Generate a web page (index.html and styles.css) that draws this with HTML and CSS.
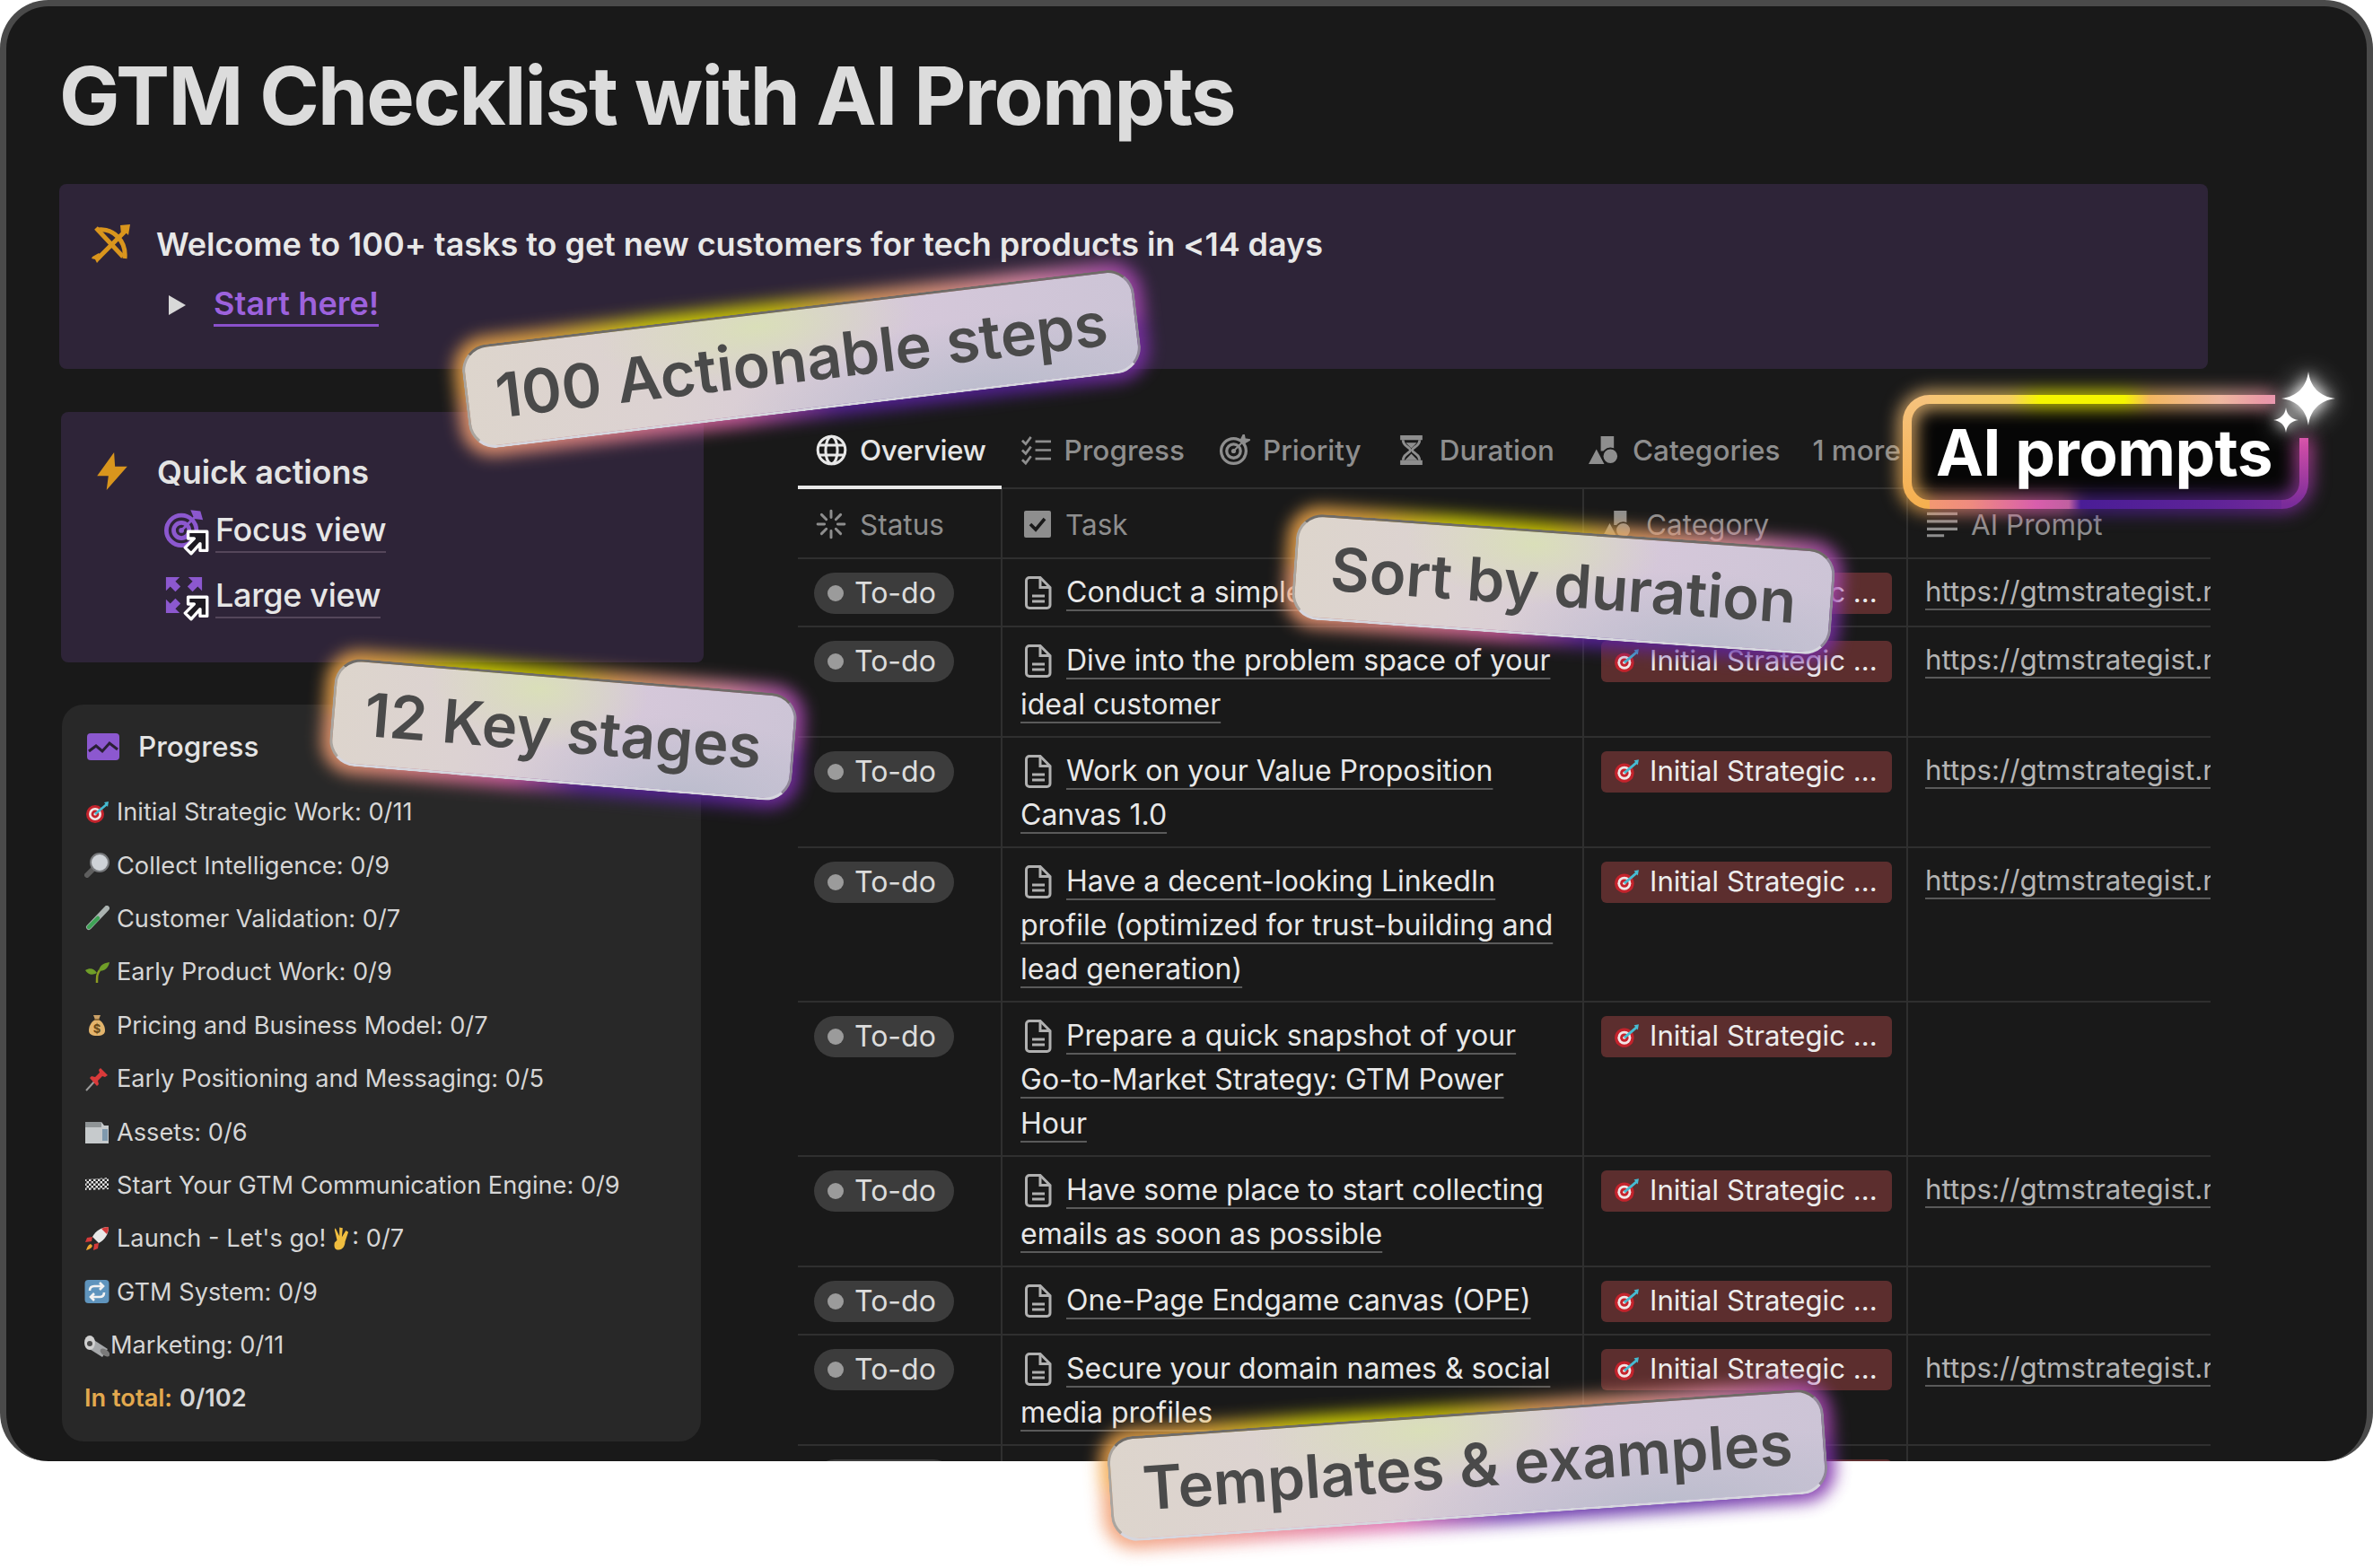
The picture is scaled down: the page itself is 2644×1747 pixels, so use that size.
FILE: index.html
```html
<!DOCTYPE html>
<html lang="en">
<head>
<meta charset="utf-8">
<title>GTM Checklist with AI Prompts</title>
<link rel="stylesheet" href="styles.css">
</head>
<body>
<svg class="defs" width="0" height="0" aria-hidden="true">
  <symbol id="dart" viewBox="0 0 28 28">
    <circle cx="12" cy="16" r="10" fill="#c4232c"/><circle cx="12" cy="16" r="7" fill="#f2e6e6"/><circle cx="12" cy="16" r="4.4" fill="#c4232c"/><circle cx="12" cy="16" r="1.6" fill="#f2e6e6"/>
    <path d="M12 16L25 5" stroke="#46bcd2" stroke-width="2.6"/><path d="M22 3l5-1-1 6z" fill="#46bcd2"/>
  </symbol>
  <symbol id="doc" viewBox="0 0 30 37">
    <path d="M5 1.5h12l11 11V32a3.500 3.500 0 0 1-3.500 3.500H5A3.500 3.500 0 0 1 1.500 32V5A3.500 3.500 0 0 1 5 1.500z" fill="none" stroke="#b0b0b0" stroke-width="3"/>
    <path d="M17 2v10.500h10.500M8 22h14M8 28h14" fill="none" stroke="#b0b0b0" stroke-width="3"/>
  </symbol>
  <symbol id="shortcut" viewBox="0 0 26 26">
    <path d="M5 2h19v19h-7v-7L8 24 2 18l9-9H5z" fill="#1d1a22" stroke="#fff" stroke-width="3" stroke-linejoin="round"/>
  </symbol>
</svg>

<div class="stage">
  <div class="window">
    <h1 class="title">GTM Checklist with AI Prompts</h1>

    <section class="callout banner">
      <svg class="ico-bow" viewBox="0 0 44 44"><g fill="none" stroke="#d9951d" stroke-width="5"><path d="M7 6C24 4 39 18 37 38"/><path d="M5 4l30 32M38 7L7 38"/></g><path d="M32 1l11-1-2 12-4-4-4 3z M1 36l7-4 4 4-6 7-2-4-4-1z" fill="#d9951d"/></svg>
      <div class="callout-body">
        <p class="callout-head">Welcome to 100+ tasks to get new customers for tech products in &lt;14 days</p>
        <p class="toggle"><span class="tri"></span><a class="start">Start here!</a></p>
      </div>
    </section>

    <div class="columns">
      <aside class="side">
        <section class="callout quick">
          <svg class="ico-bolt" viewBox="0 0 34 40"><path d="M19 0L1 25h12l-2 15 22-25H20z" fill="#d9951d"/></svg>
          <div class="quick-body">
            <p class="quick-head">Quick actions</p>
            <a class="qlink">
              <span class="qicon">
                <svg class="qsvg" viewBox="0 0 46 46"><g fill="none" stroke="#8c58cf" stroke-width="5"><circle cx="20" cy="24" r="17.500"/><circle cx="20" cy="24" r="9"/></g><circle cx="20" cy="24" r="3" fill="#8c58cf"/><path d="M21 23L36 8M33 2l8 1 2 7-7-1z" stroke="#8c58cf" stroke-width="3" fill="#8c58cf"/></svg>
                <svg class="qarrow"><use href="#shortcut"/></svg>
              </span>
              <span class="qtext">Focus view</span>
            </a>
            <a class="qlink">
              <span class="qicon">
                <svg class="qsvg" viewBox="0 0 46 46"><path d="M2 2h16l-5 5 6 6-6 6-6-6-5 5zM44 2v16l-5-5-6 6-6-6 6-6-5-5zM2 44V28l5 5 6-6 6 6-6 6 5 5z" fill="#8c58cf"/></svg>
                <svg class="qarrow"><use href="#shortcut"/></svg>
              </span>
              <span class="qtext">Large view</span>
            </a>
          </div>
        </section>

        <section class="progress">
          <header class="progress-head">
            <svg class="ico-chart" viewBox="0 0 36 30"><rect x="0" y="0" width="36" height="30" rx="4" fill="#8c58cf"/><path d="M2 20l8-6 7 6 8-9 9 7" fill="none" stroke="#2a1f36" stroke-width="3"/></svg>
            <span>Progress</span>
          </header>
          <ul class="plist">
            <li><svg class="emo"><use href="#dart"/></svg>Initial Strategic Work: 0/11</li>
            <li><svg class="emo" viewBox="0 0 28 28"><path d="M12 16L3 25" stroke="#5e5e5e" stroke-width="6" stroke-linecap="round"/><circle cx="17" cy="11" r="10" fill="#cfd3d8" stroke="#77797c" stroke-width="2"/></svg>Collect Intelligence: 0/9</li>
            <li><svg class="emo" viewBox="0 0 28 28"><path d="M25 3L5 24" stroke="#aab2b0" stroke-width="6" stroke-linecap="round"/><path d="M15 14L5 24" stroke="#3ea356" stroke-width="4.500" stroke-linecap="round"/></svg>Customer Validation: 0/7</li>
            <li><svg class="emo" viewBox="0 0 28 28"><path d="M14 26c0-7 0-10 3-14" fill="none" stroke="#8c9c22" stroke-width="2.500"/><path d="M16 13C17 6 22 4 28 3c-1 6-5 10-12 10zM14 15C11 10 6 9 1 12c3 5 8 6 13 3z" fill="#6f9e28"/></svg>Early Product Work: 0/9</li>
            <li><svg class="emo" viewBox="0 0 28 28"><path d="M10 3h8l-2 5h-4z" fill="#caa066"/><path d="M12 8h4c5 3 7 8 7 12 0 4-3 6-9 6s-9-2-9-6c0-4 2-9 7-12z" fill="#e3b46c"/><path d="M11 8h6" stroke="#7a5a2a" stroke-width="1.500"/><text class="dollar" x="14" y="23" text-anchor="middle">$</text></svg>Pricing and Business Model: 0/7</li>
            <li><svg class="emo" viewBox="0 0 28 28"><path d="M13 15L2 27" stroke="#9a9a9a" stroke-width="2"/><path d="M18 2l8 8-3 2-3-1-5 5 1 4-2 2L6 13l2-2 4 1 5-5-1-3z" fill="#d93a3a"/></svg>Early Positioning and Messaging: 0/5</li>
            <li><svg class="emo" viewBox="0 0 28 28"><path d="M1 3h18l3 4h5v20H1z" fill="#c6cacc"/><path d="M1 3h18v6H1z" fill="#8f9496"/><rect x="20" y="11" width="6" height="13" fill="#7f99ad"/></svg>Assets: 0/6</li>
            <li><svg class="emo" viewBox="0 0 28 28"><defs><pattern id="chk" width="5" height="5" patternUnits="userSpaceOnUse"><rect width="5" height="5" fill="#e4e4e4"/><rect width="2.500" height="2.500" fill="#1e1e1e"/><rect x="2.500" y="2.500" width="2.500" height="2.500" fill="#1e1e1e"/></pattern></defs><path d="M1 8l26-2v13L1 20z" fill="url(#chk)"/></svg>Start Your GTM Communication Engine: 0/9</li>
            <li><svg class="emo" viewBox="0 0 28 28"><path d="M27 1c-8 0-14 4-18 11l7 7c7-4 11-10 11-18z" fill="#e8e8e8"/><path d="M27 1c-4 0-6 1-8 2l6 6c1-2 2-5 2-8z" fill="#d43a3a"/><path d="M9 12l-6 1-2 5 7-1zM16 19l-1 6-5 2 1-7z" fill="#d43a3a"/><path d="M7 20c-3 1-4 4-5 7 3-1 6-2 7-5z" fill="#f0a830"/></svg>Launch - Let's go!<svg class="emo-in" viewBox="0 0 20 28"><path d="M3 1l5 10 0-11 4 1-1 11 5-8 3 2-4 12c0 5-3 10-8 10s-6-4-5-9l3-3-3-13z" fill="#efbd3f"/></svg>: 0/7</li>
            <li><svg class="emo" viewBox="0 0 28 28"><rect x="0.500" y="1" width="27" height="26" rx="4" fill="#5f94bd"/><path d="M6 13c0-4 2-5 5-5h9M17 4l4 4-4 4M22 15c0 4-2 5-5 5H8M11 24l-4-4 4-4" fill="none" stroke="#f2f2f2" stroke-width="2.600"/></svg>GTM System: 0/9</li>
            <li class="tight"><svg class="emo" viewBox="0 0 28 28"><path d="M6 5l20 13-6 9L1 15z" fill="#a6a8aa"/><ellipse cx="23" cy="22" rx="3.500" ry="6" fill="#7a7a7a" transform="rotate(-55 23 22)"/><ellipse cx="6" cy="11" rx="6" ry="8" fill="#d0d0d0"/><circle cx="6" cy="12" r="3" fill="#4a4a4a"/></svg>Marketing: 0/11</li>
            <li class="total"><b class="amber">In total:</b><b>0/102</b></li>
          </ul>
        </section>
      </aside>

      <main class="board">
        <nav class="tabs">
          <a class="tab active">
            <svg class="tab-ico" viewBox="0 0 32 32"><g fill="none" stroke="#e8e8e8" stroke-width="2.800"><circle cx="16" cy="16" r="14"/><ellipse cx="16" cy="16" rx="6" ry="14"/><path d="M3 11h26M3 21h26"/></g></svg>
            Overview
          </a>
          <a class="tab">
            <svg class="tab-ico" viewBox="0 0 36 32"><g fill="none" stroke="#8e8e8e" stroke-width="2.800"><path d="M2 5l4 4 6-8M2 16l4 4 6-8M2 27l4 4 6-8M17 6h18M17 16h18M17 26h18"/></g></svg>
            Progress
          </a>
          <a class="tab">
            <svg class="tab-ico" viewBox="0 0 34 34"><g fill="none" stroke="#8e8e8e" stroke-width="3.200"><circle cx="16" cy="18" r="13.500"/><circle cx="16" cy="18" r="7.500"/></g><circle cx="16" cy="18" r="2.500" fill="#8e8e8e"/><path d="M16 18L29 5M27 0l1 5 5 1-5 3-4-3z" stroke="#8e8e8e" stroke-width="2" fill="#8e8e8e"/></svg>
            Priority
          </a>
          <a class="tab">
            <svg class="tab-ico" viewBox="0 0 28 34"><path d="M2 1h24v5H2zM2 28h24v5H2z" fill="#8e8e8e"/><path d="M5 6c0 7 8 8 8 11s-8 4-8 11M23 6c0 7-8 8-8 11s8 4 8 11" fill="none" stroke="#8e8e8e" stroke-width="2.800"/><path d="M8 9h12l-6 6zM7 28l7-7 7 7z" fill="#8e8e8e"/></svg>
            Duration
          </a>
          <a class="tab">
            <svg class="tab-ico" viewBox="0 0 36 34"><path d="M14 1h15v17H14z M0 33l9-17 9 17z" fill="#8e8e8e"/><circle cx="25" cy="24" r="9" fill="#8e8e8e" stroke="#191919" stroke-width="2"/></svg>
            Categories
          </a>
          <a class="tab more">1 more</a>
        </nav>
        <table class="db">
          <colgroup><col class="c1"><col class="c2"><col class="c3"><col class="c4"></colgroup>
          <thead>
            <tr>
              <th><span class="th"><svg class="th-ico" viewBox="0 0 32 32"><g stroke="#8e8e8e" stroke-width="2.800" stroke-linecap="round"><path d="M16 2v7M16 23v7M2 16h7M23 16h7M6 6l5 5M21 21l5 5M26 6l-5 5M11 21l-5 5"/></g></svg>Status</span></th>
              <th><span class="th th-task"><svg class="th-ico small" viewBox="0 0 30 30"><rect width="30" height="30" rx="2" fill="#8e8e8e"/><path d="M7 15l6 6 10-12" fill="none" stroke="#191919" stroke-width="3.600"/></svg>Task</span></th>
              <th><span class="th th-cat"><svg class="th-ico" viewBox="0 0 36 34"><path d="M14 1h15v17H14z M0 33l9-17 9 17z" fill="#8e8e8e"/><circle cx="25" cy="24" r="9" fill="#8e8e8e" stroke="#191919" stroke-width="2"/></svg>Category</span></th>
              <th><span class="th th-ai"><svg class="th-ico" viewBox="0 0 32 28"><path d="M0 3h32M0 11h32M0 19h32M0 26h18" stroke="#8e8e8e" stroke-width="3"/></svg>AI Prompt</span></th>
            </tr>
          </thead>
          <tbody>
            <tr class="r1">
              <td><span class="pill"><i class="dot"></i>To-do</span></td>
              <td class="task"><a class="tlink"><svg class="doc"><use href="#doc"/></svg><span class="u">Conduct a simple market analysis</span></a></td>
              <td><span class="tag"><svg class="tag-emo"><use href="#dart"/></svg>Initial Strategic ...</span></td>
              <td class="url"><span class="u">https://gtmstrategist.notion.site</span></td>
            </tr>
            <tr class="r2">
              <td><span class="pill"><i class="dot"></i>To-do</span></td>
              <td class="task"><a class="tlink"><svg class="doc"><use href="#doc"/></svg><span class="u">Dive into the problem space of your <br>ideal customer</span></a></td>
              <td><span class="tag"><svg class="tag-emo"><use href="#dart"/></svg>Initial Strategic ...</span></td>
              <td class="url"><span class="u">https://gtmstrategist.notion.site</span></td>
            </tr>
            <tr class="r2">
              <td><span class="pill"><i class="dot"></i>To-do</span></td>
              <td class="task"><a class="tlink"><svg class="doc"><use href="#doc"/></svg><span class="u">Work on your Value Proposition <br>Canvas 1.0</span></a></td>
              <td><span class="tag"><svg class="tag-emo"><use href="#dart"/></svg>Initial Strategic ...</span></td>
              <td class="url"><span class="u">https://gtmstrategist.notion.site</span></td>
            </tr>
            <tr class="r3">
              <td><span class="pill"><i class="dot"></i>To-do</span></td>
              <td class="task"><a class="tlink"><svg class="doc"><use href="#doc"/></svg><span class="u">Have a decent-looking LinkedIn <br>profile (optimized for trust-building and <br>lead generation)</span></a></td>
              <td><span class="tag"><svg class="tag-emo"><use href="#dart"/></svg>Initial Strategic ...</span></td>
              <td class="url"><span class="u">https://gtmstrategist.notion.site</span></td>
            </tr>
            <tr class="r3">
              <td><span class="pill"><i class="dot"></i>To-do</span></td>
              <td class="task"><a class="tlink"><svg class="doc"><use href="#doc"/></svg><span class="u">Prepare a quick snapshot of your <br>Go-to-Market Strategy: GTM Power <br>Hour</span></a></td>
              <td><span class="tag"><svg class="tag-emo"><use href="#dart"/></svg>Initial Strategic ...</span></td>
              <td class="url"></td>
            </tr>
            <tr class="r2">
              <td><span class="pill"><i class="dot"></i>To-do</span></td>
              <td class="task"><a class="tlink"><svg class="doc"><use href="#doc"/></svg><span class="u">Have some place to start collecting <br>emails as soon as possible</span></a></td>
              <td><span class="tag"><svg class="tag-emo"><use href="#dart"/></svg>Initial Strategic ...</span></td>
              <td class="url"><span class="u">https://gtmstrategist.notion.site</span></td>
            </tr>
            <tr class="r1">
              <td><span class="pill"><i class="dot"></i>To-do</span></td>
              <td class="task"><a class="tlink"><svg class="doc"><use href="#doc"/></svg><span class="u">One-Page Endgame canvas (OPE)</span></a></td>
              <td><span class="tag"><svg class="tag-emo"><use href="#dart"/></svg>Initial Strategic ...</span></td>
              <td class="url"></td>
            </tr>
            <tr class="r2">
              <td><span class="pill"><i class="dot"></i>To-do</span></td>
              <td class="task"><a class="tlink"><svg class="doc"><use href="#doc"/></svg><span class="u">Secure your domain names &amp; social <br>media profiles</span></a></td>
              <td><span class="tag"><svg class="tag-emo"><use href="#dart"/></svg>Initial Strategic ...</span></td>
              <td class="url"><span class="u">https://gtmstrategist.notion.site</span></td>
            </tr>
            <tr class="r1">
              <td><span class="pill"><i class="dot"></i>To-do</span></td>
              <td class="task"></td>
              <td><span class="tag"><svg class="tag-emo"><use href="#dart"/></svg>Initial Strategic ...</span></td>
              <td class="url"></td>
            </tr>
          </tbody>
        </table>
      </main>
    </div>
  </div>

  <div class="sticker s1"><span class="face">100 Actionable steps</span></div>
  <div class="sticker s2"><span class="face">12 Key stages</span></div>
  <div class="sticker s3"><span class="face">Sort by duration</span></div>
  <div class="sticker s4"><span class="face">Templates &amp; examples</span></div>

  <div class="ai-box">
    <svg class="ai-frame" viewBox="0 0 520 170">
      <defs>
        <linearGradient id="gTop" x1="30" x2="440" y1="0" y2="0" gradientUnits="userSpaceOnUse">
          <stop offset="0" stop-color="#f6c27c"/><stop offset=".28" stop-color="#f6d060"/><stop offset=".36" stop-color="#f5f500"/><stop offset=".59" stop-color="#f5f500"/><stop offset=".66" stop-color="#f3b660"/><stop offset=".85" stop-color="#efb8a0"/><stop offset="1" stop-color="#e88fa8"/>
        </linearGradient>
        <linearGradient id="gLeft" x1="0" x2="0" y1="30" y2="147" gradientUnits="userSpaceOnUse">
          <stop offset="0" stop-color="#f6c27c"/><stop offset="1" stop-color="#f5b050"/>
        </linearGradient>
        <linearGradient id="gBot" x1="30" x2="480" y1="0" y2="0" gradientUnits="userSpaceOnUse">
          <stop offset="0" stop-color="#f6a06a"/><stop offset=".16" stop-color="#ee8a80"/><stop offset=".32" stop-color="#d85eac"/><stop offset=".40" stop-color="#c060a0"/><stop offset=".43" stop-color="#4a1d96"/><stop offset=".75" stop-color="#5e2398"/><stop offset="1" stop-color="#7a2c9a"/>
        </linearGradient>
        <linearGradient id="gRight" x1="0" x2="0" y1="73" y2="147" gradientUnits="userSpaceOnUse">
          <stop offset="0" stop-color="#d850a8"/><stop offset="1" stop-color="#7a2c9a"/>
        </linearGradient>
      </defs>
      <g class="ai-blur">
        <rect class="ai-inner" x="42" y="42" width="418" height="93" rx="20"/>
        <path d="M55 30H440" stroke="url(#gTop)"/>
        <path d="M55 30A25 25 0 0 0 30 55V122A25 25 0 0 0 55 147" stroke="url(#gLeft)"/>
        <path d="M55 147H447" stroke="url(#gBot)"/>
        <path d="M447 147A25 25 0 0 0 472 122V73" stroke="url(#gRight)"/>
      </g>
      <g class="ai-line">
        <path d="M55 30H440" stroke="url(#gTop)"/>
        <path d="M55 30A25 25 0 0 0 30 55V122A25 25 0 0 0 55 147" stroke="url(#gLeft)"/>
        <path d="M55 147H447" stroke="url(#gBot)"/>
        <path d="M447 147A25 25 0 0 0 472 122V73" stroke="url(#gRight)"/>
      </g>
    </svg>
    <span class="ai-text">AI prompts</span>
    <svg class="star star-big" viewBox="0 0 60 60"><path d="M30 0C32 17 43 28 60 30 43 32 32 43 30 60 28 43 17 32 0 30 17 28 28 17 30 0z" fill="#fff"/></svg>
    <svg class="star star-small" viewBox="0 0 60 60"><path d="M30 0C32 17 43 28 60 30 43 32 32 43 30 60 28 43 17 32 0 30 17 28 28 17 30 0z" fill="#fff"/></svg>
  </div>
</div>
</body>
</html>
```
FILE: styles.css
```css
* { box-sizing: border-box; }
html, body { margin: 0; padding: 0; background: #fff; }
body { font-family: "Inter", "Liberation Sans", sans-serif; color: #e6e6e6; }
p, ul, h1 { margin: 0; padding: 0; }
ul { list-style: none; }
a { color: inherit; text-decoration: none; }
.defs { position: absolute; }

.stage { position: relative; width: 2644px; height: 1747px; overflow: hidden; }

.window {
  height: 1628px;
  background: #191919;
  border: 7px solid #4a4a4a;
  border-bottom: 0;
  border-radius: 54px;
  overflow: hidden;
  padding: 0 0 0 59px;
}

.title {
  font-size: 90px;
  font-weight: 700;
  line-height: 106px;
  letter-spacing: -1.720px;
  color: #dcdcdc;
  padding: 47px 0 45px 0;
}

.callout { background: #2e2438; border-radius: 8px; display: flex; }

.banner { width: 2394px; height: 206px; padding: 45px 0 0 36px; }
.ico-bow { width: 44px; height: 44px; flex: none; }
.callout-body { padding-left: 28px; }
.callout-head { font-size: 36px; font-weight: 600; line-height: 46px; color: #e8e8e8; letter-spacing: -.05px; margin-top: -1px; }
.toggle { display: flex; align-items: center; padding: 20px 0 0 14px; }
.tri { width: 0; height: 0; border-left: 19px solid #d8d8d8; border-top: 11px solid transparent; border-bottom: 11px solid transparent; margin-right: 31px; }
.start { font-size: 36px; font-weight: 600; line-height: 46px; color: #9d62dd; border-bottom: 3px solid #8a50cc; letter-spacing: .1px; }

.columns { display: grid; grid-template-columns: 718px 1574px; column-gap: 105px; padding-top: 48px; }

.side { padding-left: 2px; }
.quick { width: 716px; height: 279px; padding: 45px 0 0 39px; }
.ico-bolt { width: 36px; height: 42px; flex: none; }
.quick-body { padding-left: 32px; margin-top: -1px; }
.quick-head { font-size: 36px; font-weight: 600; line-height: 46px; color: #e4e4e4; letter-spacing: -.1px; }
.qlink { display: flex; align-items: center; margin: 14px 0 0 8px; height: 56px; }
.qlink + .qlink { margin-top: 17px; }
.qicon { position: relative; width: 47px; height: 47px; flex: none; margin-right: 10px; }
.qsvg { width: 44px; height: 44px; display: block; }
.qarrow { position: absolute; right: -3px; bottom: -4px; width: 29px; height: 29px; }
.qtext { font-size: 36px; font-weight: 500; line-height: 46px; color: #e6e6e6; border-bottom: 2px solid #54465a; letter-spacing: -.3px; padding-bottom: 1px; }

.progress { width: 712px; height: 821px; margin: 47px 0 0 1px; background: #282828; border-radius: 24px; padding: 27px 0 0 25px; }
.progress-head { display: flex; align-items: center; gap: 21px; font-size: 31.500px; font-weight: 500; line-height: 40px; color: #e4e4e4; padding-left: 3px; }
.ico-chart { width: 36px; height: 30px; }
.plist { padding-top: 23px; }
.plist li { display: flex; align-items: center; height: 59.400px; font-size: 27.200px; font-weight: 400; color: #d6d6d6; white-space: pre; }
.emo { width: 28px; height: 28px; flex: none; margin-right: 8px; }
.emo-in { width: 18px; height: 26px; margin: 0 3px 0 8px; }
.dollar { font: 700 13px "Inter", sans-serif; fill: #6a4a1a; }
.tight .emo { margin-right: 1px; }
.total b { font-weight: 600; }
.amber { color: #e3a94e; margin-right: 8px; }

.tabs { display: flex; height: 86px; align-items: center; padding: 0 0 0 20px; border-bottom: 2px solid #2f2f2f; position: relative; font-size: 31.500px; font-weight: 500; color: #8e8e8e; white-space: nowrap; }
.tab { display: flex; align-items: center; gap: 14px; margin-right: 38px; }
.tab-ico { width: 35px; height: 35px; flex: none; }
.tab.active { color: #e6e6e6; letter-spacing: -.3px; }
.tab.active::after { content: ""; position: absolute; left: 0; bottom: -2px; width: 227px; height: 4px; background: #e8e8e8; }
.tab.more { margin: 0 0 0 -2px; }

.db { border-collapse: collapse; table-layout: fixed; width: 1574px; }
.c1 { width: 227px; }
.c2 { width: 648px; }
.c3 { width: 361px; }
.c4 { width: 338px; }
.db th, .db td { padding: 0; vertical-align: top; text-align: left; border-bottom: 2px solid #2f2f2f; border-right: 2px solid #2f2f2f; font-weight: 400; overflow: hidden; }
.db th:last-child, .db td:last-child { border-right: 0; }
.db thead tr { height: 77px; }
.r1 { height: 76px; }
.r2 { height: 123px; }
.r3 { height: 172px; }

.th { display: flex; align-items: center; gap: 15px; height: 76px; padding: 2px 0 0 20px; font-size: 31.500px; color: #8e8e8e; }
.th-ico { width: 34px; height: 34px; flex: none; }
.th-ico.small { width: 30px; height: 30px; }
.th-task { padding-left: 24px; gap: 16px; }
.th-cat { padding-left: 20px; }
.th-ai { padding-left: 21px; }

.pill { display: inline-flex; align-items: center; height: 46px; margin: 15px 0 0 18px; padding: 0 20px 2px 15px; background: #3c3c3c; border-radius: 23px; font-size: 32px; color: #dcdcdc; }
.dot { width: 18px; height: 18px; border-radius: 50%; background: #9b9b9b; margin: 2px 12px 0 0; }

.task { padding: 12px 8px 0 20px !important; font-size: 32px; font-weight: 500; line-height: 49px; color: #e8e8e8; }
.doc { width: 30px; height: 37px; margin: 0 16px 0 5px; vertical-align: -8px; }
.u { text-decoration: underline; text-decoration-color: #5a5a5a; text-decoration-thickness: 2px; text-underline-offset: 8px; text-decoration-skip-ink: none; }

.tag { display: flex; align-items: center; width: 324px; height: 46px; margin: 15px 0 0 19px; padding: 0 0 2px 13px; background: #5c2e2e; border-radius: 6px; font-size: 31.200px; color: #ececec; white-space: nowrap; }
.tag-emo { width: 30px; height: 30px; flex: none; margin-right: 11px; }

.url { padding: 12px 0 0 19px !important; font-size: 31.300px; line-height: 49px; color: #b4b4b4; white-space: nowrap; }

/* Floating promo stickers over the screenshot */
.sticker { position: absolute; z-index: 5; }
.sticker::before {
  content: "";
  position: absolute;
  inset: -9px;
  border-radius: 36px;
  filter: blur(9px);
  opacity: .88;
  background:
    linear-gradient(90deg, #f5a850 0, #f0b040 14%, #e2e000 30%, #d8d000 46%, #f0a860 60%, #e890b0 84%, #a040b0 100%) top / 100% 50% no-repeat,
    linear-gradient(90deg, #f2a070 0, #ec8a88 18%, #d860a8 40%, #5c22a4 55%, #5a22a0 80%, #8030aa 100%) bottom / 100% 50% no-repeat;
}
.face {
  position: relative;
  display: flex;
  align-items: center;
  justify-content: center;
  width: 100%;
  height: 100%;
  border-radius: 30px;
  border: 3px solid;
  border-color: #6f6c68 #8f8798 #d6d6de #aaa59f;
  font-weight: 600;
  font-size: 67px;
  color: #4a4a4a;
  white-space: nowrap;
  background:
    radial-gradient(ellipse 24% 60% at 44% 12%, rgba(218, 226, 180, .85), transparent),
    radial-gradient(ellipse 40% 80% at 78% 108%, #babccc, transparent),
    linear-gradient(100deg, #ddd5cc 0, #dcd2d2 30%, #d6c8da 62%, #ccc4d6 100%);
}
.s1 .face { font-size: 68px; }
.s1 { left: 516px; top: 342px; width: 754px; height: 116px; transform: rotate(-6.800deg); }
.s2 { left: 369px; top: 753px; width: 517px; height: 120px; transform: rotate(4.700deg); }
.s3 { left: 1441px; top: 592px; width: 602px; height: 118px; transform: rotate(4deg); }
.s4 { left: 1235px; top: 1574px; width: 800px; height: 117px; transform: rotate(-4deg); }

/* AI prompts highlight */
.ai-box { position: absolute; z-index: 6; left: 2095px; top: 415px; width: 520px; height: 170px; }
.ai-frame { position: absolute; inset: 0; width: 520px; height: 170px; overflow: visible; }
.ai-frame path { fill: none; stroke-width: 10; }
.ai-blur { filter: blur(10px); }
.ai-blur path { stroke-width: 16; }
.ai-inner { fill: #060606; }
.ai-text { position: absolute; left: 62px; top: 39px; font-size: 71px; line-height: 100px; font-weight: 700; color: #fff; letter-spacing: -.5px; white-space: nowrap; }
.star { position: absolute; filter: drop-shadow(0 0 8px #fff) drop-shadow(0 0 14px rgba(255,255,255,.6)); }
.star-big { left: 447px; top: -1px; width: 60px; height: 60px; }
.star-small { left: 438px; top: 39px; width: 28px; height: 28px; }
```
